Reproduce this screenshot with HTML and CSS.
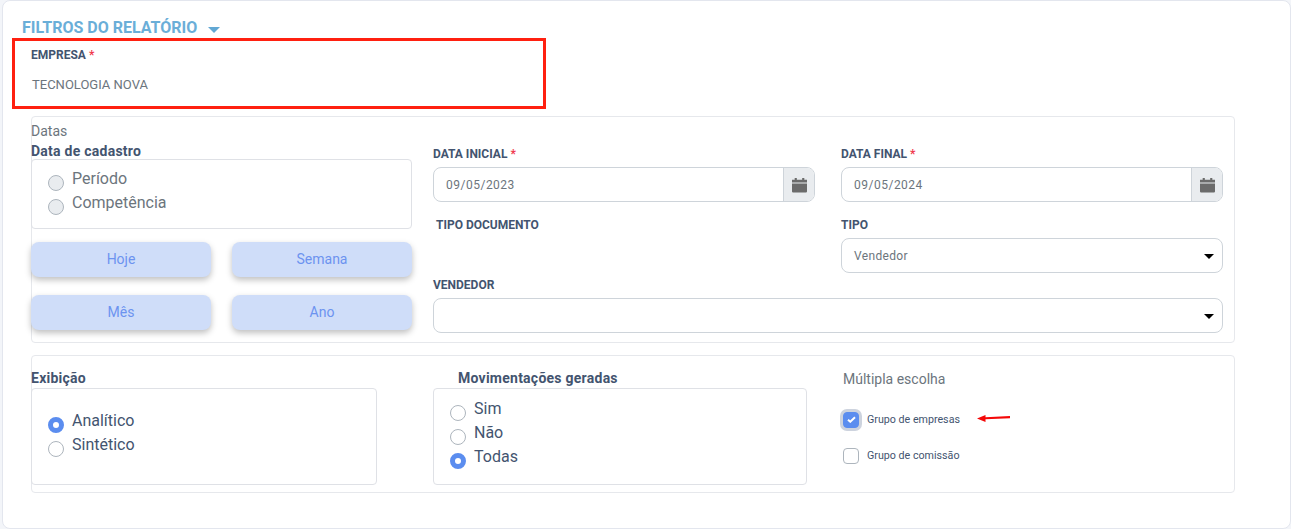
FILE: index.html
```html
<!DOCTYPE html>
<html lang="pt-BR">
<head>
    <meta charset="UTF-8">
    <meta name="viewport" content="width=device-width, initial-scale=1.0">
    <title>Filtros do relatório</title>
    <link rel="stylesheet" href="styles.css">
</head>
<body>
    <div class="card">
        <h2 class="card-title">FILTROS DO RELATÓRIO <span class="title-caret"></span></h2>

        <div class="company-box">
            <label class="field-label">EMPRESA <span class="required">*</span></label>
            <div class="company-name">TECNOLOGIA NOVA</div>
        </div>

        <div class="section section-dates">
            <div class="dates-left">
                <div class="section-caption">Datas</div>
                <div class="group-title">Data de cadastro</div>
                <div class="group-box box-cadastro">
                    <label class="radio-row"><span class="radio radio-grey"></span>Período</label>
                    <label class="radio-row"><span class="radio radio-grey"></span>Competência</label>
                </div>
                <div class="quick-buttons">
                    <button type="button" class="quick-btn">Hoje</button>
                    <button type="button" class="quick-btn">Semana</button>
                    <button type="button" class="quick-btn">Mês</button>
                    <button type="button" class="quick-btn">Ano</button>
                </div>
            </div>

            <div class="dates-right">
                <div class="field">
                    <label class="field-label">DATA INICIAL <span class="required">*</span></label>
                    <div class="input-group">
                        <div class="input-value">09/05/2023</div>
                        <div class="input-addon">
                            <svg class="calendar-icon" viewBox="0 0 14 14"><path d="M2.5 0.5h2v1.5h5V0.5h2v1.5H14v2.6H0V2h2.5zM0 5.5h14v7.5a1 1 0 0 1-1 1H1a1 1 0 0 1-1-1z"/></svg>
                        </div>
                    </div>
                </div>
                <div class="field">
                    <label class="field-label">DATA FINAL <span class="required">*</span></label>
                    <div class="input-group">
                        <div class="input-value">09/05/2024</div>
                        <div class="input-addon">
                            <svg class="calendar-icon" viewBox="0 0 14 14"><path d="M2.5 0.5h2v1.5h5V0.5h2v1.5H14v2.6H0V2h2.5zM0 5.5h14v7.5a1 1 0 0 1-1 1H1a1 1 0 0 1-1-1z"/></svg>
                        </div>
                    </div>
                </div>
                <div class="field field-second">
                    <label class="field-label label-indent">TIPO DOCUMENTO</label>
                </div>
                <div class="field field-second">
                    <label class="field-label">TIPO</label>
                    <div class="select-box">Vendedor<span class="select-caret"></span></div>
                </div>
                <div class="field field-wide">
                    <label class="field-label">VENDEDOR</label>
                    <div class="select-box"><span class="select-caret"></span></div>
                </div>
            </div>
        </div>

        <div class="section section-options">
            <div class="option-col col-exibicao">
                <div class="group-title">Exibição</div>
                <div class="group-box box-exibicao">
                    <label class="radio-row"><span class="radio radio-on"></span>Analítico</label>
                    <label class="radio-row"><span class="radio"></span>Sintético</label>
                </div>
            </div>
            <div class="option-col col-mov">
                <div class="group-title title-indent">Movimentações geradas</div>
                <div class="group-box box-mov">
                    <label class="radio-row"><span class="radio"></span>Sim</label>
                    <label class="radio-row"><span class="radio"></span>Não</label>
                    <label class="radio-row"><span class="radio radio-on"></span>Todas</label>
                </div>
            </div>
            <div class="option-col col-multi">
                <div class="multi-title">Múltipla escolha</div>
                <label class="check-row">
                    <span class="check check-on">
                        <svg viewBox="0 0 10 8" class="check-mark"><path d="M1 4.2l2.6 2.4L9 1.4" fill="none" stroke="#fff" stroke-width="2.2"/></svg>
                    </span>
                    Grupo de empresas
                    <svg class="red-arrow" viewBox="0 0 33 8"><path d="M0 4.6L8.5 1v2.2L33 2v2.2L8.5 5.2V8z" fill="#f40808"/></svg>
                </label>
                <label class="check-row"><span class="check"></span>Grupo de comissão</label>
            </div>
        </div>
    </div>
</body>
</html>
```

FILE: styles.css
```css
* {
    box-sizing: border-box;
}

body {
    font-family: Roboto, "Liberation Sans", sans-serif;
    margin: 0;
    height: 529px;
    overflow: hidden;
    background-color: #f3f5f9;
    color: #43546f;
}

.card {
    margin: 0 0 0 2px;
    height: 529px;
    padding: 0 0 0 9px;
    background-color: #fff;
    border: 1px solid #e3e6ee;
    border-radius: 8px;
}

.card-title {
    margin: 0;
    padding: 17px 0 0 10px;
    height: 37px;
    font-size: 16px;
    line-height: 19px;
    font-weight: 700;
    color: #6aaed8;
}

.title-caret {
    display: inline-block;
    width: 0;
    height: 0;
    margin-left: 7px;
    vertical-align: 0;
    border-left: 6px solid transparent;
    border-right: 6px solid transparent;
    border-top: 6px solid #62a8d4;
}

.company-box {
    width: 534px;
    height: 71px;
    padding: 7px 0 0 16px;
    border: 3px solid #ff2010;
}

.field-label {
    display: block;
    font-size: 12px;
    line-height: 14px;
    font-weight: 700;
    color: #43546f;
}

.required {
    color: #f0394d;
}

.company-name {
    margin: 15px 0 0 1px;
    font-size: 13px;
    line-height: 15px;
    color: #6c757d;
}

.section {
    width: 1204px;
    margin-left: 19px;
    border: 1px solid #e6e8ec;
    border-radius: 4px;
    display: flex;
}

.section-dates {
    height: 227px;
    margin-top: 7px;
}

.dates-left {
    width: 381px;
    margin-left: -1px;
    flex-shrink: 0;
}

.section-caption {
    padding-top: 6px;
    font-size: 14px;
    line-height: 16px;
    color: #6c757d;
}

.group-title {
    font-size: 14px;
    line-height: 16px;
    font-weight: 700;
    letter-spacing: 0.25px;
    color: #43546f;
}

.section-caption + .group-title {
    margin-top: 4px;
}

.group-box {
    border: 1px solid #dfe1e6;
    border-radius: 4px;
}

.box-cadastro {
    height: 70px;
    padding: 7px 0 0 16px;
    color: #6c757d;
}

.radio-row {
    display: flex;
    height: 24px;
    font-size: 16px;
    line-height: 24px;
    font-weight: 400;
}

.radio {
    width: 16px;
    height: 16px;
    margin: 8px 8px 0 0;
    flex-shrink: 0;
    background-color: #fff;
    border: 1px solid #adb5bd;
    border-radius: 50%;
}

.radio-grey {
    background-color: #e9ecef;
}

.radio-on {
    background-color: #fff;
    border: 5px solid #5b8def;
}

.quick-buttons {
    margin-top: 13px;
    display: grid;
    grid-template-columns: 180px 180px;
    grid-auto-rows: 35px;
    column-gap: 21px;
    row-gap: 18px;
}

.quick-btn {
    padding: 0 0 2px;
    font-family: inherit;
    font-size: 14px;
    color: #6c93f0;
    background-color: #cfddf9;
    border: none;
    border-radius: 8px;
    box-shadow: 0 3px 6px rgba(0, 0, 0, 0.25);
}

.dates-right {
    flex: 1;
    margin-left: 21px;
    padding-top: 30px;
    display: grid;
    grid-template-columns: 382px 382px;
    grid-template-rows: 56px 75px 49px;
    column-gap: 26px;
    align-content: start;
}

.field-second {
    padding-top: 15px;
}

.field-wide {
    grid-column: 1 / 3;
}

.label-indent {
    padding-left: 3px;
}

.field .field-label {
    margin-bottom: 6px;
}

.input-group {
    display: flex;
    height: 35px;
    border: 1px solid #ced4da;
    border-radius: 8px;
    overflow: hidden;
}

.input-value {
    flex: 1;
    padding-left: 12px;
    font-size: 12px;
    line-height: 34px;
    letter-spacing: 0.5px;
    color: #6c757d;
}

.input-addon {
    width: 31px;
    display: flex;
    align-items: center;
    justify-content: center;
    background-color: #e9ecef;
    border-left: 1px solid #ced4da;
}

.calendar-icon {
    width: 15px;
    height: 16px;
    fill: #6b6b6b;
}

.select-box {
    position: relative;
    height: 35px;
    padding-left: 12px;
    font-size: 12px;
    line-height: 34px;
    letter-spacing: 0.35px;
    color: #6c757d;
    border: 1px solid #ced4da;
    border-radius: 8px;
}

.select-caret {
    position: absolute;
    top: 15px;
    right: 8px;
    width: 0;
    height: 0;
    border-left: 5px solid transparent;
    border-right: 5px solid transparent;
    border-top: 5px solid #000;
}

.section-options {
    height: 138px;
    margin-top: 12px;
    padding-top: 14px;
}

.option-col {
    flex-shrink: 0;
}

.col-exibicao {
    width: 346px;
    margin-left: -1px;
}

.col-mov {
    width: 374px;
    margin-left: 56px;
}

.col-multi {
    margin-left: 36px;
}

.title-indent {
    padding-left: 25px;
}

.box-exibicao {
    height: 97px;
    margin-top: 2px;
    padding: 20px 0 0 16px;
}

.box-mov {
    height: 97px;
    margin-top: 2px;
    padding: 8px 0 0 16px;
}

.multi-title {
    font-size: 14px;
    line-height: 16px;
    margin-top: 1px;
    color: #6c757d;
}

.check-row {
    position: relative;
    display: flex;
    align-items: center;
    height: 17px;
    font-size: 10.7px;
    color: #43546f;
}

.check-row:first-of-type {
    margin-top: 24px;
}

.check-row + .check-row {
    margin-top: 19px;
}

.check {
    width: 16px;
    height: 16px;
    margin-right: 8px;
    flex-shrink: 0;
    background-color: #fff;
    border: 1px solid #adb5bd;
    border-radius: 4px;
}

.check-on {
    display: flex;
    align-items: center;
    justify-content: center;
    background-color: #5b8def;
    border-color: #5b8def;
    box-shadow: 0 0 0 3px #cdd3de;
}

.check-mark {
    width: 9px;
    height: 7px;
}

.red-arrow {
    position: absolute;
    left: 134px;
    top: 3px;
    width: 33px;
    height: 8px;
}
```
